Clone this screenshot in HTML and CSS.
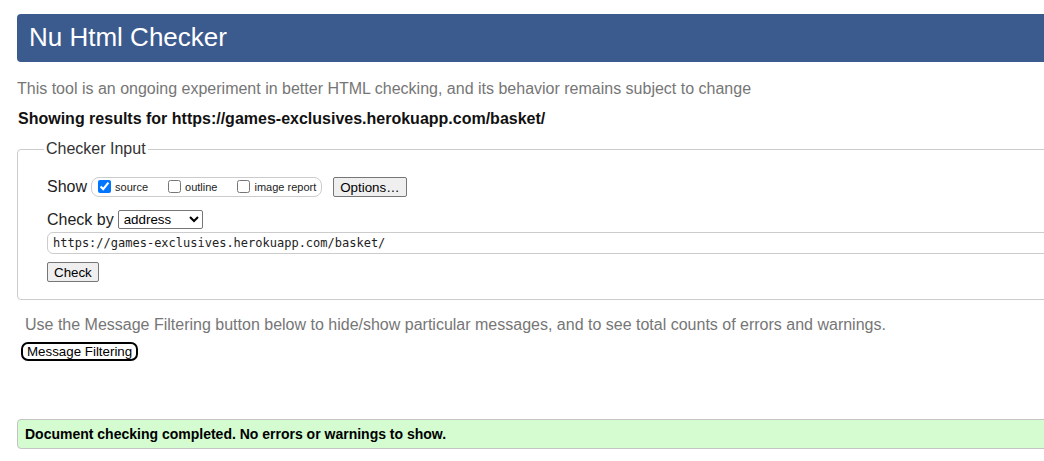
FILE: index.html
```html
<!DOCTYPE html>
<html lang="en">
<head>
<meta charset="utf-8">
<title>Nu Html Checker</title>
<link rel="stylesheet" href="styles.css">
</head>
<body>
<div class="page">
  <h1 class="title">Nu Html Checker</h1>
  <p class="intro">This tool is an ongoing experiment in better HTML checking, and its behavior remains subject to change</p>
  <p class="showing">Showing results for https://games-exclusives.herokuapp.com/basket/</p>
  <fieldset class="input-box">
    <legend class="legend">Checker Input</legend>
    <div class="row show-row">
      <span class="row-label">Show</span>
      <span class="opts">
        <label class="opt"><input type="checkbox" class="cb" checked>source</label>
        <label class="opt"><input type="checkbox" class="cb">outline</label>
        <label class="opt last"><input type="checkbox" class="cb">image report</label>
      </span>
      <button class="btn options-btn" type="button">Options…</button>
    </div>
    <div class="row by-row">
      <span class="row-label">Check by</span>
      <select class="sel">
        <option>address</option>
        <option>file upload</option>
        <option>text input</option>
      </select>
    </div>
    <div class="url-row">
      <input class="url" type="text" value="https://games-exclusives.herokuapp.com/basket/">
    </div>
    <div class="check-row">
      <button class="btn" type="button">Check</button>
    </div>
  </fieldset>
  <p class="filter-note">Use the Message Filtering button below to hide/show particular messages, and to see total counts of errors and warnings.</p>
  <button class="filter-btn" type="button">Message Filtering</button>
  <p class="success">Document checking completed. No errors or warnings to show.</p>
</div>
</body>
</html>
```

FILE: styles.css
```css
html, body {
  margin: 0;
  padding: 0;
  overflow: hidden;
  background: #fff;
}
body {
  font-family: "Liberation Sans", Arial, sans-serif;
  font-size: 16px;
  color: #000;
}
.page {
  width: 1100px;
  padding: 14px 0 0 17px;
}
.title {
  margin: 0;
  height: 48px;
  box-sizing: border-box;
  padding: 0 0 2px 12px;
  line-height: 46px;
  font-size: 26px;
  font-weight: normal;
  color: #fff;
  background: #3b5b8f;
  border-radius: 4px 0 0 4px;
}
.intro {
  margin: 18px 0 0 0;
  color: #767676;
  line-height: 18px;
}
.showing {
  margin: 12px 0 0 1px;
  font-weight: bold;
  color: #111;
  line-height: 18px;
}
.input-box {
  margin: 12px 0 0 0;
  padding: 19px 0 17px 29px;
  border: 1px solid #cccccc;
  border-radius: 4px;
  min-inline-size: 0;
}
.legend {
  padding: 0 2px;
  margin-left: -3px;
  color: #333;
  font-size: 16px;
  line-height: 18px;
}
.row {
  display: flex;
  align-items: center;
}
.row-label {
  font-size: 16px;
  color: #222;
}
.show-row {
  height: 20px;
}
.opts {
  display: inline-flex;
  align-items: center;
  height: 20px;
  box-sizing: border-box;
  margin-left: 4px;
  padding: 0 5px 0 2px;
  border: 1px solid #cccccc;
  border-radius: 8px;
}
.opt {
  display: inline-flex;
  align-items: center;
  font-size: 11px;
  color: #222;
  margin-right: 16px;
}
.opt.last {
  margin-right: 0;
}
.cb {
  width: 13px;
  height: 13px;
  margin: 0 4px 2px 4px;
  accent-color: #0075ff;
}
.btn {
  font-family: "Liberation Sans", Arial, sans-serif;
  font-size: 13.33px;
  padding: 1px 6px;
  height: 20px;
  background: #efefef;
  border: 1px solid #767676;
  border-radius: 2px;
  color: #000;
}
.options-btn {
  margin-left: 11px;
}
.by-row {
  margin-top: 13px;
}
.sel {
  margin-left: 4px;
  width: 85px;
  height: 19px;
  font-family: "Liberation Sans", Arial, sans-serif;
  font-size: 13.33px;
  border: 1px solid #767676;
  border-radius: 2px;
  background: #fff;
  color: #000;
  padding: 0 0 0 1px;
}
.url-row {
  margin-top: 3px;
}
.url {
  display: block;
  width: 1100px;
  height: 22px;
  box-sizing: border-box;
  border: 1px solid #cccccc;
  border-radius: 6px;
  padding: 0 5px;
  font-family: "DejaVu Sans Mono", "Liberation Mono", monospace;
  font-size: 12px;
  color: #222;
}
.check-row {
  margin-top: 8px;
}
.filter-note {
  margin: 16px 0 0 8px;
  color: #767676;
  line-height: 18px;
}
.filter-btn {
  display: block;
  margin: 8px 0 0 4px;
  height: 19px;
  padding: 0 4px;
  font-family: "Liberation Sans", Arial, sans-serif;
  font-size: 13.33px;
  color: #000;
  background: #fff;
  border: 2px solid #000;
  border-radius: 7px;
  line-height: 14px;
}
.success {
  margin: 58px 0 0 0;
  height: 30px;
  box-sizing: border-box;
  padding: 0 7px;
  line-height: 28px;
  font-size: 14px;
  font-weight: bold;
  color: #000;
  background: #d4fcd0;
  border: 1px solid #c4c4c4;
  border-radius: 4px 0 0 4px;
}
```
